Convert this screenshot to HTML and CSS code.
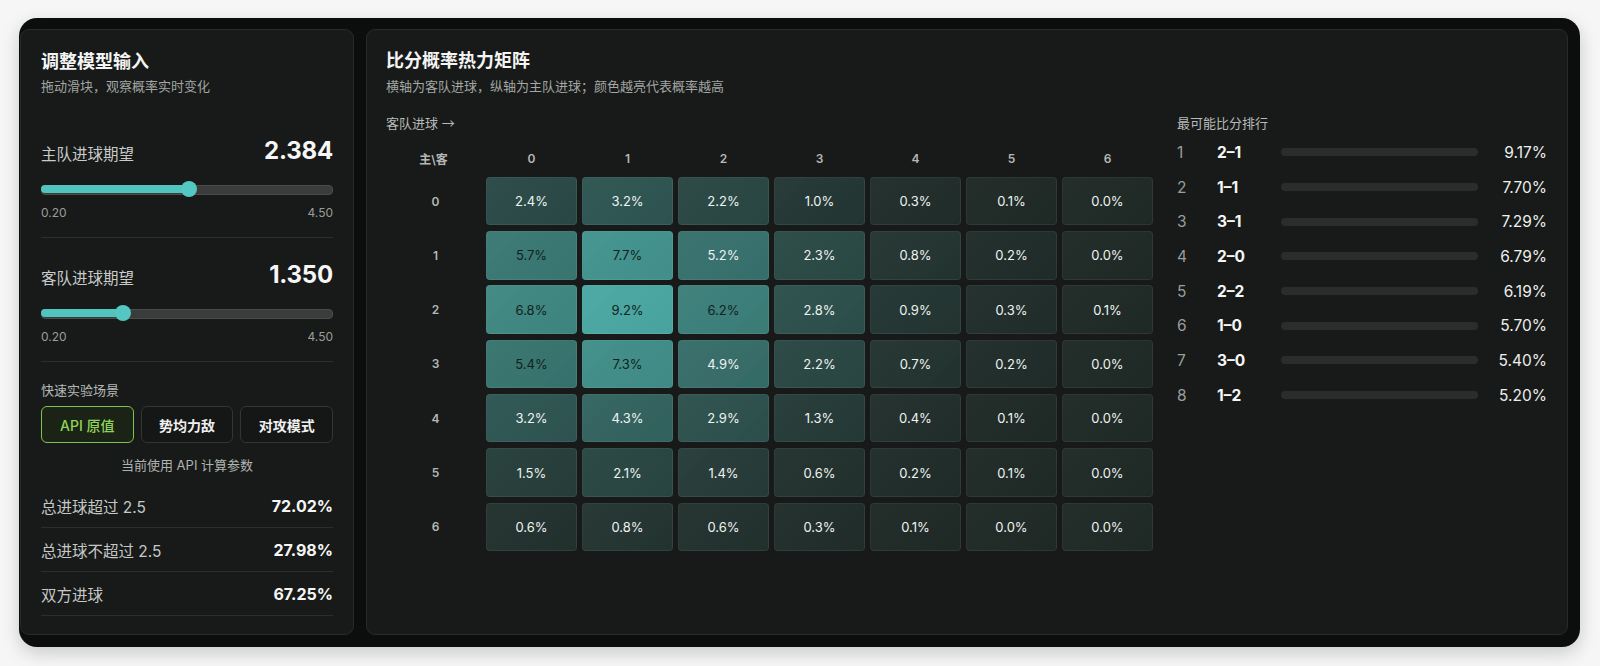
FILE: index.html
```html
<!DOCTYPE html>
<html lang="zh-CN">
<head>
<meta charset="utf-8">
<title>比分概率</title>
<link rel="stylesheet" href="styles.css">
</head>
<body>
<div class="frame">
  <aside class="panel left">
    <h1 class="title">调整模型输入</h1>
    <p class="sub">拖动滑块，观察概率实时变化</p>

    <section class="group">
      <div class="row-head"><span class="lbl">主队进球期望</span><span class="big">2.384</span></div>
      <div class="slider"><div class="fill" style="width:50.8%"></div><div class="thumb" style="left:50.8%"></div></div>
      <div class="range"><span>0.20</span><span>4.50</span></div>
    </section>

    <section class="group">
      <div class="row-head"><span class="lbl">客队进球期望</span><span class="big">1.350</span></div>
      <div class="slider"><div class="fill" style="width:28%"></div><div class="thumb" style="left:28%"></div></div>
      <div class="range"><span>0.20</span><span>4.50</span></div>
    </section>

    <section class="scen">
      <div class="scen-title">快速实验场景</div>
      <div class="btns">
        <button class="btn active">API 原值</button>
        <button class="btn">势均力敌</button>
        <button class="btn">对攻模式</button>
      </div>
      <div class="note">当前使用 API 计算参数</div>
    </section>

    <div class="stats">
      <div class="stat"><span>总进球超过 2.5</span><b>72.02%</b></div>
      <div class="stat"><span>总进球不超过 2.5</span><b>27.98%</b></div>
      <div class="stat"><span>双方进球</span><b>67.25%</b></div>
    </div>
  </aside>

  <main class="panel right">
    <h2 class="title">比分概率热力矩阵</h2>
    <p class="sub">横轴为客队进球，纵轴为主队进球；颜色越亮代表概率越高</p>
    <div class="content">
      <div class="heat">
        <div class="cap">客队进球 <span class="arrow">→</span></div>
        <div class="grid">
          <div class="hd">主\客</div><div class="hd">0</div><div class="hd">1</div><div class="hd">2</div><div class="hd">3</div><div class="hd">4</div><div class="hd">5</div><div class="hd">6</div>

          <div class="rl">0</div>
          <div class="cell" style="--t:.261">2.4%</div><div class="cell" style="--t:.348">3.2%</div><div class="cell" style="--t:.239">2.2%</div><div class="cell" style="--t:.109">1.0%</div><div class="cell" style="--t:.033">0.3%</div><div class="cell" style="--t:.011">0.1%</div><div class="cell" style="--t:0">0.0%</div>

          <div class="rl">1</div>
          <div class="cell dark" style="--t:.62">5.7%</div><div class="cell dark" style="--t:.837">7.7%</div><div class="cell" style="--t:.565">5.2%</div><div class="cell" style="--t:.25">2.3%</div><div class="cell" style="--t:.087">0.8%</div><div class="cell" style="--t:.022">0.2%</div><div class="cell" style="--t:0">0.0%</div>

          <div class="rl">2</div>
          <div class="cell dark" style="--t:.739">6.8%</div><div class="cell dark" style="--t:1">9.2%</div><div class="cell dark" style="--t:.674">6.2%</div><div class="cell" style="--t:.304">2.8%</div><div class="cell" style="--t:.098">0.9%</div><div class="cell" style="--t:.033">0.3%</div><div class="cell" style="--t:.011">0.1%</div>

          <div class="rl">3</div>
          <div class="cell dark" style="--t:.587">5.4%</div><div class="cell dark" style="--t:.793">7.3%</div><div class="cell" style="--t:.533">4.9%</div><div class="cell" style="--t:.239">2.2%</div><div class="cell" style="--t:.076">0.7%</div><div class="cell" style="--t:.022">0.2%</div><div class="cell" style="--t:0">0.0%</div>

          <div class="rl">4</div>
          <div class="cell" style="--t:.348">3.2%</div><div class="cell" style="--t:.467">4.3%</div><div class="cell" style="--t:.315">2.9%</div><div class="cell" style="--t:.141">1.3%</div><div class="cell" style="--t:.043">0.4%</div><div class="cell" style="--t:.011">0.1%</div><div class="cell" style="--t:0">0.0%</div>

          <div class="rl">5</div>
          <div class="cell" style="--t:.163">1.5%</div><div class="cell" style="--t:.228">2.1%</div><div class="cell" style="--t:.152">1.4%</div><div class="cell" style="--t:.065">0.6%</div><div class="cell" style="--t:.022">0.2%</div><div class="cell" style="--t:.011">0.1%</div><div class="cell" style="--t:0">0.0%</div>

          <div class="rl">6</div>
          <div class="cell" style="--t:.065">0.6%</div><div class="cell" style="--t:.087">0.8%</div><div class="cell" style="--t:.065">0.6%</div><div class="cell" style="--t:.033">0.3%</div><div class="cell" style="--t:.011">0.1%</div><div class="cell" style="--t:0">0.0%</div><div class="cell" style="--t:0">0.0%</div>
        </div>
      </div>

      <div class="rank">
        <div class="cap">最可能比分排行</div>
        <div class="rrow"><span class="rn">1</span><b>2–1</b><i class="bar"></i><span class="rv">9.17%</span></div>
        <div class="rrow"><span class="rn">2</span><b>1–1</b><i class="bar"></i><span class="rv">7.70%</span></div>
        <div class="rrow"><span class="rn">3</span><b>3–1</b><i class="bar"></i><span class="rv">7.29%</span></div>
        <div class="rrow"><span class="rn">4</span><b>2–0</b><i class="bar"></i><span class="rv">6.79%</span></div>
        <div class="rrow"><span class="rn">5</span><b>2–2</b><i class="bar"></i><span class="rv">6.19%</span></div>
        <div class="rrow"><span class="rn">6</span><b>1–0</b><i class="bar"></i><span class="rv">5.70%</span></div>
        <div class="rrow"><span class="rn">7</span><b>3–0</b><i class="bar"></i><span class="rv">5.40%</span></div>
        <div class="rrow"><span class="rn">8</span><b>1–2</b><i class="bar"></i><span class="rv">5.20%</span></div>
      </div>
    </div>
  </main>
</div>
</body>
</html>
```
FILE: styles.css
```css
* { box-sizing: border-box; }
html, body { margin: 0; padding: 0; }
body {
  width: 1600px;
  height: 666px;
  background: #f6f6f6;
  font-family: "Inter", "Noto Sans CJK SC", sans-serif;
  color: #e8e8e8;
  padding: 18px 20px 0 19px;
  overflow: hidden;
}
.frame {
  width: 1561px;
  height: 629px;
  background: #0c0e0d;
  border-radius: 18px;
  padding: 11px 12px 12px 1px;
  display: flex;
  gap: 12px;
  box-shadow: 0 6px 18px rgba(0,0,0,0.18);
}
.panel {
  background: #171a18;
  border: 1px solid #272a28;
  border-radius: 9px;
  padding: 20px 20px;
}
.left { width: 334px; flex: none; }
.right { flex: 1; padding: 19px 20px 20px 19px; }
.title {
  margin: 0;
  font-size: 18px;
  line-height: 24px;
  font-weight: 700;
  color: #f4f4f4;
}
.sub {
  margin: 3px 0 0;
  font-size: 13px;
  line-height: 18px;
  color: #a3a6a4;
}
.right .sub { margin-top: 4px; }
.left .sub { margin-bottom: 19px; }
.group {
  padding: 21px 0 16px;
  border-bottom: 1px solid #2b2e2c;
}
.row-head {
  display: flex;
  justify-content: space-between;
  align-items: center;
  height: 30px;
}
.lbl { font-size: 15.5px; color: #c9cbca; padding-top: 5px; }
.big { font-size: 24px; font-weight: 700; color: #f6f6f6; letter-spacing: -0.2px; }
.slider {
  position: relative;
  margin-top: 16px;
  height: 16px;
}
.slider::before {
  content: "";
  position: absolute;
  left: 0; right: 0; top: 4px;
  height: 8px;
  border-radius: 4px;
  background: #3a3c3b;
  border: 1px solid #4a4c4b;
}
.fill {
  position: absolute;
  left: 0; top: 4px;
  height: 8px;
  border-radius: 4px;
  background: #52c4bf;
}
.thumb {
  position: absolute;
  top: 0;
  width: 16px; height: 16px;
  margin-left: -8px;
  border-radius: 50%;
  background: #55c7c2;
}
.range {
  margin-top: 8px;
  display: flex;
  justify-content: space-between;
  font-size: 12px;
  line-height: 16px;
  color: #9a9d9b;
}
.scen { padding-top: 19px; }
.scen-title { font-size: 13px; line-height: 18px; color: #b4b7b5; }
.btns {
  margin-top: 7px;
  display: grid;
  grid-template-columns: repeat(3, 1fr);
  gap: 7px;
}
.btn {
  height: 37px;
  border-radius: 6px;
  border: 1px solid #323533;
  background: #151716;
  color: #f0f0f0;
  font-family: inherit;
  font-size: 14px;
  font-weight: 600;
}
.btn.active {
  border-color: #7fc34e;
  background: #1b2317;
  color: #8fd45a;
  font-weight: 500;
}
.note {
  margin-top: 13px;
  text-align: center;
  font-size: 13px;
  line-height: 18px;
  color: #b0b3b1;
}
.stats { margin-top: 10px; }
.stat {
  height: 44px;
  display: flex;
  justify-content: space-between;
  align-items: center;
  border-bottom: 1px solid #2b2e2c;
  font-size: 15.5px;
  color: #c6c8c7;
}
.stat b { font-size: 16px; color: #f6f6f6; font-weight: 700; }

.content {
  display: flex;
  gap: 24px;
  margin-top: 19px;
}
.heat { width: 767px; flex: none; }
.rank { flex: 1; }
.cap { font-size: 13px; line-height: 18px; color: #b7bab8; }
.arrow { font-family: "Noto Sans CJK SC", "DejaVu Sans", sans-serif; }
.grid {
  margin-top: 13px;
  display: grid;
  grid-template-columns: 95px repeat(7, 1fr);
  grid-template-rows: 26px repeat(7, 48.5px);
  column-gap: 5px;
  row-gap: 5.8px;
}
.hd, .rl {
  display: flex;
  align-items: center;
  justify-content: center;
  font-size: 12px;
  font-weight: 600;
  color: #b4b7b5;
}
.rl { padding-left: 4px; }
.cell {
  display: flex;
  align-items: center;
  justify-content: center;
  border-radius: 4px;
  border: 1px solid rgba(255,255,255,0.06);
  font-size: 13px;
  color: #eef3f1;
  background-color: rgb(calc(31 + 43 * var(--t)), calc(41 + 127 * var(--t)), calc(38 + 125 * var(--t)));
  background-image: linear-gradient(135deg, rgba(255,255,255,0.025), rgba(0,0,0,0.03));
}
.cell.dark { color: #102320; }

.rank .cap { margin-bottom: 3px; }
.rrow {
  height: 34.7px;
  display: grid;
  grid-template-columns: 40px 64px 1fr 69px;
  align-items: center;
  font-size: 15.5px;
}
.rn { color: #9a9d9b; }
.rrow b { font-weight: 700; color: #f6f6f6; }
.bar {
  display: block;
  height: 8px;
  border-radius: 4px;
  background: #2a2d2b;
}
.rv { text-align: right; color: #eeeeee; }
```
